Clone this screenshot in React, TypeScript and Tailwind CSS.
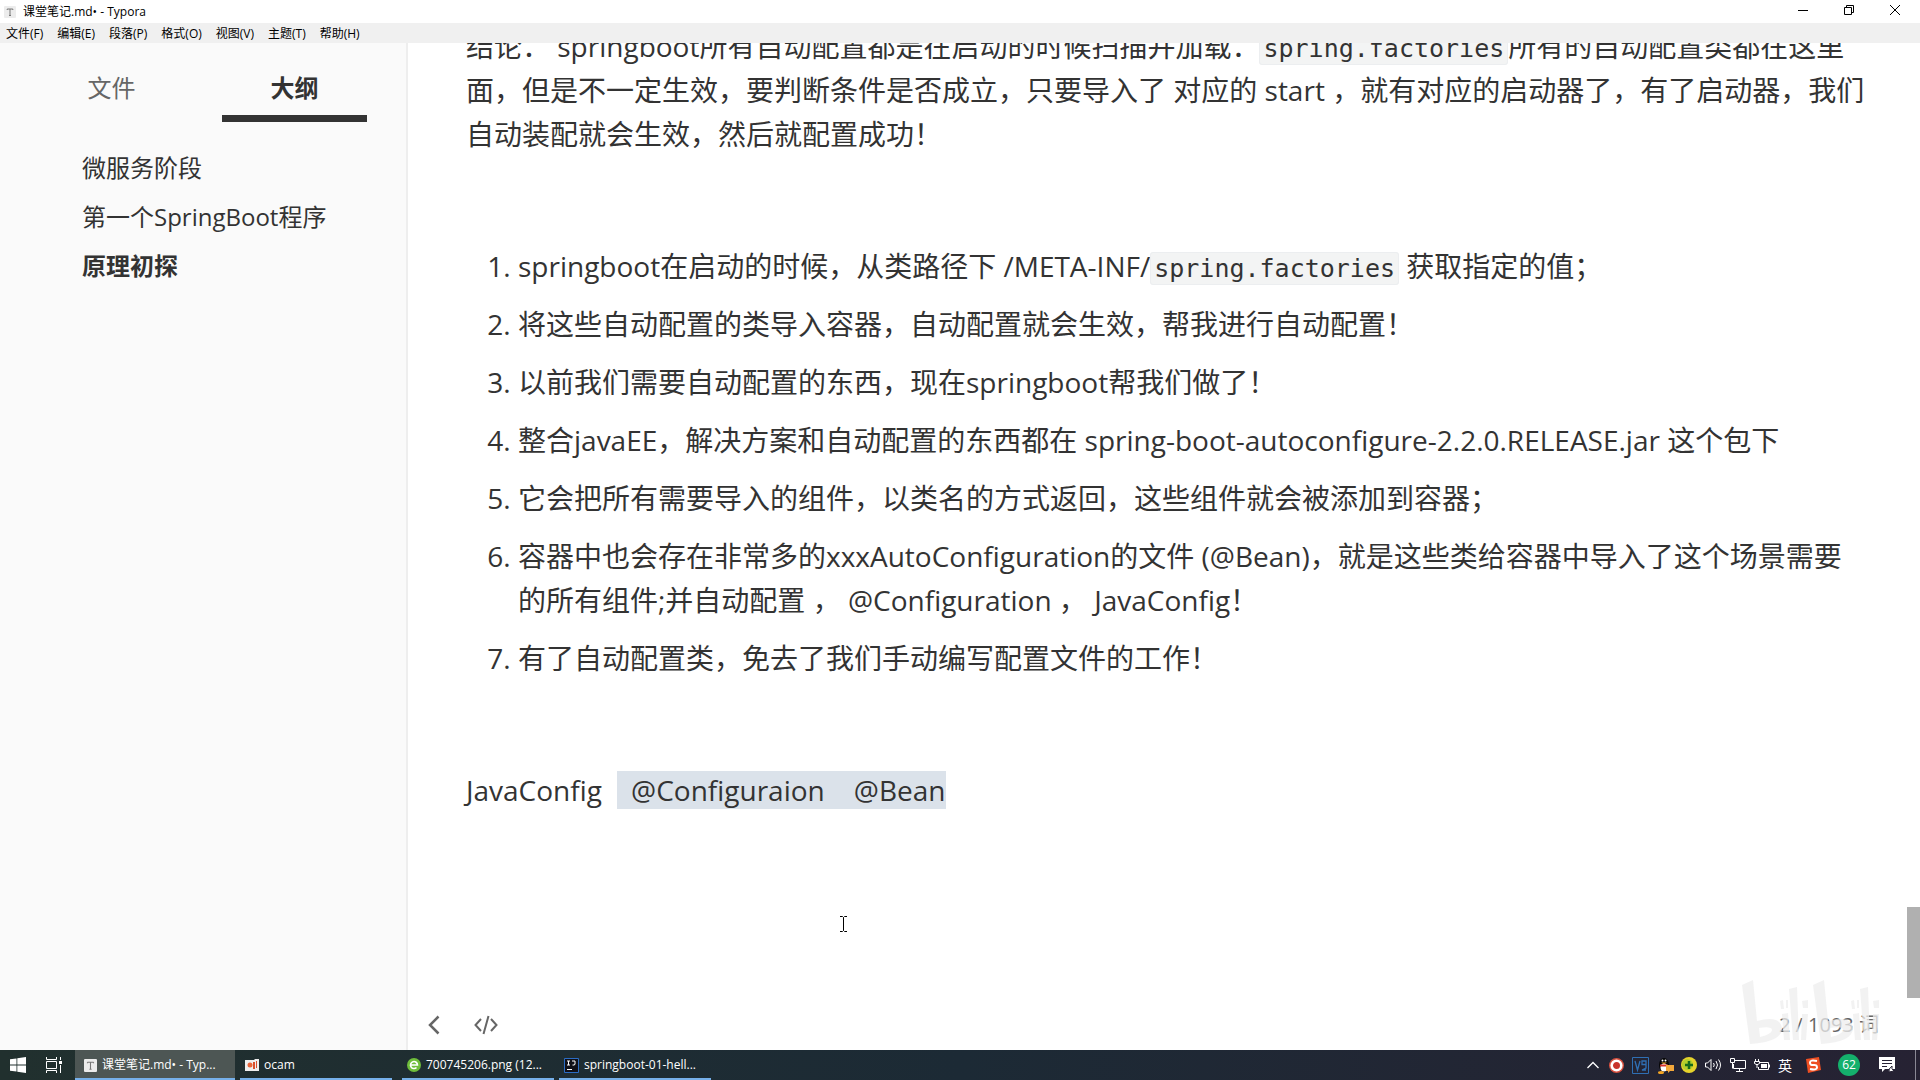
import React from "react";

const menu = ["文件(F)", "编辑(E)", "段落(P)", "格式(O)", "视图(V)", "主题(T)", "帮助(H)"];

function TyporaIcon({ size }: { size: number }) {
  return (
    <svg width={size} height={size} viewBox="0 0 12 12" aria-hidden="true">
      <rect width="12" height="12" rx="1" fill="#ececec" />
      <path d="M3.2 3h5.6M6 3v6.5M5 9.5h2M3.2 3v1M8.8 3v1" stroke="#777" fill="none" />
    </svg>
  );
}

function Code({ children }: { children: React.ReactNode }) {
  return (
    <code className="rounded-[3px] border border-[#eceef0] bg-[#f3f4f4] px-[3px] py-px font-['DejaVu_Sans_Mono',monospace] text-[25px] leading-none">
      {children}
    </code>
  );
}

const points: React.ReactNode[] = [
  <>springboot在启动的时候，从类路径下 /META-INF/<Code>spring.factories</Code> 获取指定的值；</>,
  <>将这些自动配置的类导入容器，自动配置就会生效，帮我进行自动配置！</>,
  <>以前我们需要自动配置的东西，现在springboot帮我们做了！</>,
  <>整合javaEE，解决方案和自动配置的东西都在 spring-boot-autoconfigure-2.2.0.RELEASE.jar 这个包下</>,
  <>它会把所有需要导入的组件，以类名的方式返回，这些组件就会被添加到容器；</>,
  <>容器中也会存在非常多的xxxAutoConfiguration的文件 (@Bean)，就是这些类给容器中导入了这个场景需要<br />的所有组件;并自动配置 ， @Configuration ， JavaConfig！</>,
  <>有了自动配置类，免去了我们手动编写配置文件的工作！</>,
];

function TitleBar() {
  return (
    <header className="shrink-0 text-[12px] text-black">
      <div className="flex h-[23px] items-center bg-white pl-1 pr-[2px]">
        <TyporaIcon size={12} />
        <h1 className="ml-[7px] grow text-[12px]">课堂笔记.md• - Typora</h1>
        <button aria-label="最小化" className="flex h-5 w-[46px] items-center justify-center self-start">
          <svg width="10" height="10" viewBox="0 0 10 10"><path d="M0 5.5h10" stroke="#000" /></svg>
        </button>
        <button aria-label="还原" className="flex h-5 w-[46px] items-center justify-center self-start">
          <svg width="10" height="10" viewBox="0 0 10 10" fill="none" stroke="#000"><path d="M.5 2.5h7v7h-7zM2.5 2V.5h7v7H8" /></svg>
        </button>
        <button aria-label="关闭" className="flex h-5 w-[46px] items-center justify-center self-start">
          <svg width="10" height="10" viewBox="0 0 10 10"><path d="M0 0l10 10M10 0L0 10" stroke="#000" /></svg>
        </button>
      </div>
      <nav className="flex h-5 items-center gap-[14px] bg-[#f0f0f0] pl-[6px] pt-[2px]">
        {menu.map((m) => <button key={m}>{m}</button>)}
      </nav>
    </header>
  );
}

function Sidebar() {
  return (
    <aside className="w-[408px] shrink-0 border-r-2 border-[#eeeeee] bg-[#fafafa] text-[24px] text-[#333]">
      <div className="flex pl-[39px]" role="tablist">
        <button role="tab" aria-selected="false" className="mt-[22px] h-[57px] w-[145px] pb-[12px] text-center leading-[30px] text-[#666]">文件</button>
        <button role="tab" aria-selected="true" className="ml-[38px] mt-[22px] h-[57px] w-[145px] border-b-[7px] border-[#333] pb-[5px] font-bold leading-[30px]">大纲</button>
      </div>
      <nav className="mt-[21px] flex flex-col pl-[82px] leading-[49px]">
        <a href="#a">微服务阶段</a>
        <a href="#b">第一个SpringBoot程序</a>
        <a href="#c" className="font-bold">原理初探</a>
      </nav>
    </aside>
  );
}

function Watermark() {
  return (
    <svg className="pointer-events-none absolute bottom-1 right-[36px]" width="142" height="66" viewBox="0 0 142 66" fill="#ededed" fillOpacity="0.75" aria-hidden="true">
      <path d="M0 5 11 0 15 41Q38 35 40 48Q40 62 8 64ZM17 48l1 9q12-3 12-7t-13-2Z" fillRule="evenodd" />
      <path d="M71 5 82 0 86 41Q109 35 111 48Q111 62 79 64ZM88 48l1 9q12-3 12-7t-13-2Z" fillRule="evenodd" />
      <path d="M47 9 55 7 57 60H51ZM118 9 126 7 128 60H122ZM38 21l3-1 1 9h-3zM44 20l2 0v8h-2zM60 21l6-1v8h-5zM109 21l3-1 1 9h-3zM115 20h2v8h-2zM131 21l6-1v8h-5zM40 34l6-1 2 27h-6zM60 34h6l-2 26h-5zM111 34l6-1 2 27h-6zM131 34h6l-2 26h-5z" />
    </svg>
  );
}

function Editor() {
  return (
    <main className="relative flex min-w-0 grow flex-col bg-white text-[#333]">
      <article className="min-h-0 grow overflow-hidden pl-[58px] text-[28px] leading-[44px]">
        <p className="-mt-[19px] whitespace-nowrap">
          结论： springboot所有自动配置都是在启动的时候扫描并加载：<Code>spring.factories</Code>所有的自动配置类都在这里<br />
          面，但是不一定生效，要判断条件是否成立，只要导入了 对应的 start ，就有对应的启动器了，有了启动器，我们<br />
          自动装配就会生效，然后就配置成功！
        </p>
        <ol className="mt-[88px] flex list-decimal flex-col gap-[14px] whitespace-nowrap pl-[52px]">
          {points.map((p, i) => <li key={i}>{p}</li>)}
        </ol>
        <p className="mt-[88px] whitespace-pre">JavaConfig  <mark className="bg-[#dbe2ea] text-inherit">  @Configuraion    @Bean</mark></p>
      </article>
      <svg className="absolute left-[428px] top-[873px]" width="14" height="16" viewBox="0 0 14 16" fill="none" stroke="#000" aria-hidden="true">
        <path d="M4 .5h2.500l1 1 1-1H11M4 15.500h2.500l1-1 1 1H11M7.500 1.500v13" />
      </svg>
      <div className="absolute right-0 top-[864px] h-[91px] w-[13px] bg-[#b0b0b0]" />
      <footer className="relative flex h-[50px] shrink-0 items-center pl-[20px] pr-[41px] text-[#666]">
        <button aria-label="侧边栏">
          <svg width="12" height="20" viewBox="0 0 12 20" fill="none" stroke="#666" strokeWidth="2.500"><path d="M10.500 1.500 2 10l8.500 8.500" /></svg>
        </button>
        <button aria-label="源代码模式" className="ml-[34px]">
          <svg width="24" height="20" viewBox="0 0 24 20" fill="none" stroke="#666" strokeWidth="2"><path d="M7 4 1.500 10 7 16M17 4l5.500 6-5.500 6M14.500 1l-5 18" /></svg>
        </button>
        <span className="ml-auto text-[20px]">2 / 1093 词</span>
        <Watermark />
      </footer>
    </main>
  );
}

function Task({ icon, label, active }: { icon: React.ReactNode; label: string; active?: boolean }) {
  return (
    <button className={active ? "flex w-40 items-center gap-[5px] border-b-2 border-[#76b0ea] bg-[#4d5654] pl-[9px] pt-[2px]" : "flex w-[152px] items-center gap-[5px] border-b-2 border-[#76b0ea] pl-[5px] pt-[2px]"}>
      {icon}
      <span>{label}</span>
    </button>
  );
}

function Taskbar() {
  return (
    <footer className="flex h-[30px] shrink-0 bg-linear-to-r from-[#21302e] via-[#1c2a35] to-[#262233] text-[12px] text-white">
      <button aria-label="开始" className="w-[36px] pl-[10px]">
        <svg width="16" height="16" viewBox="0 0 16 16" fill="#fff"><path d="M0 2.300 6.500 1.400v6.200H0zM7.300 1.300 16 0v7.600H7.300zM0 8.400h6.500v6.200L0 13.700zM7.300 8.400H16V16l-8.700-1.300z" /></svg>
      </button>
      <button aria-label="任务视图" className="w-[39px] pl-[10px]">
        <svg width="16" height="16" viewBox="0 0 16 16" fill="none" stroke="#fff"><path d="M.5 0v2.500h10V0M.5 4.500h10v7H.5zM.5 16v-2.500h10V16M14.500 0v3M14.500 8v8" /><path d="M13 4h3v3h-3z" fill="#fff" stroke="none" /></svg>
      </button>
      <div className="flex gap-[5px]">
        <Task active icon={<TyporaIcon size={13} />} label="课堂笔记.md• - Typ..." />
        <Task label="ocam" icon={
          <svg width="14" height="12" viewBox="0 0 14 12"><path d="M0 1h9l1-1h4v12H0z" fill="#eee" /><circle cx="5" cy="6" r="2.500" fill="#e8653a" /><path d="M8 3h2v7H8zM11 2h1v7h-1z" fill="#d94e2c" /></svg>
        } />
        <span className="w-0" />
        <Task label="700745206.png (12..." icon={
          <svg width="14" height="14" viewBox="0 0 14 14"><circle cx="7" cy="7" r="7" fill="#6fbe3c" /><path d="M3 7h7.500a3.500 3.500 0 1 0-1 2.500" fill="none" stroke="#fff" strokeWidth="1.600" /></svg>
        } />
        <Task label="springboot-01-hell..." icon={
          <svg width="15" height="15" viewBox="0 0 15 15"><path d="M.5.500h14v14H.5z" fill="#101018" stroke="#2b6cc4" /><path d="M3 3h3M4.500 3v4M3 7h3M8 3h3v3q0 1.500-2.500 1M3 11.500h5" stroke="#fff" fill="none" /></svg>
        } />
      </div>
      <div className="ml-auto flex items-center">
        <svg width="12" height="8" viewBox="0 0 12 8" fill="none" stroke="#fff" strokeWidth="1.300"><path d="M.5 7 6 1.500 11.500 7" /></svg>
        <svg className="ml-[10px]" width="15" height="15" viewBox="0 0 15 15"><circle cx="7.500" cy="7.500" r="7.500" fill="#d8503f" /><circle cx="7.500" cy="7.500" r="4.800" fill="#c8342c" stroke="#fff" strokeWidth="2.600" /></svg>
        <svg className="ml-[8px]" width="17" height="17" viewBox="0 0 17 17" fill="none" stroke="#2f6fb4"><path d="M.5.500h16v16H.5z" /><path d="M3 4l2.500 9L8 4M10 4h4v3.500h-4zM14 7.500V11l-4 2h4" strokeWidth="1.300" /></svg>
        <svg className="ml-[8px]" width="17" height="17" viewBox="0 0 17 17"><ellipse cx="7" cy="8" rx="5" ry="7" fill="#050505" /><ellipse cx="7" cy="10.500" rx="3.500" ry="4" fill="#fff" /><circle cx="5.500" cy="3.500" r="1" fill="#fff" /><circle cx="8.500" cy="3.500" r="1" fill="#fff" /><path d="M4 5.500h6L7 7z" fill="#f5a623" /><path d="M3 7.500h8v2H3z" fill="#d8322a" /><ellipse cx="4" cy="15.500" rx="3" ry="1.500" fill="#f5a623" /><path d="M9 8h8v6h-4l-2 2v-2H9z" fill="#f3a83b" /></svg>
        <svg className="ml-[7px]" width="16" height="16" viewBox="0 0 16 16"><circle cx="8" cy="8" r="8" fill="#e6d32c" /><circle cx="6.500" cy="7.500" r="5.500" fill="#b5cf2c" /><path d="M8 4v8M4 8h8" stroke="#176b1c" strokeWidth="2.500" /></svg>
        <svg className="ml-[8px]" width="17" height="14" viewBox="0 0 17 14" fill="none" stroke="#fff"><path d="M.5 5h2L6 1.500v11L2.500 9h-2zM8.500 5q1.500 2 0 4M11 3q3 4 0 8M13.500 1.500q4 5.500 0 11" /></svg>
        <svg className="ml-[8px]" width="16" height="14" viewBox="0 0 16 14" fill="none" stroke="#fff"><path d="M5 2.500h10.500v8H3.500V6M9.500 10.500v3M6 13.500h7M.5.500h4v4h-4zM2.500 4.500v6" /></svg>
        <svg className="ml-[8px]" width="16" height="12" viewBox="0 0 16 12" fill="none" stroke="#fff"><path d="M6 3.500h8.500v7H4.500V8M15.500 5.500v3M1.500 0v2M4.500 0v2M.5 2.500h5v2q-2.500 2.500-5 0zM3 6v3" /><path d="M7 5h6v4H7z" fill="#fff" stroke="none" /></svg>
        <button className="ml-[8px] text-[14px]" aria-label="输入法">英</button>
        <svg className="ml-[13px]" width="16" height="16" viewBox="0 0 16 16"><path d="M1 2 14 0l2 13-13 3z" fill="#ee4f22" /><path d="M12 4Q5 2.500 5 5.500T8.500 8 12 10.500 5 12" fill="none" stroke="#fff" strokeWidth="2" /></svg>
        <span className="ml-[17px] flex size-[22px] items-center justify-center rounded-full bg-[#14b06c]">62</span>
        <button aria-label="通知" className="ml-[19px] mr-[20px]">
          <svg width="16" height="16" viewBox="0 0 16 16"><path d="M0 0h16v12H6l-3 3v-3H0z" fill="#fff" /><path d="M3 3.500h10M3 6.500h10M3 9.500h5" stroke="#262233" /><path d="M10 15q-1-3 3-6-1 3 2 5z" fill="#fff" stroke="#262233" /></svg>
        </button>
        <span className="h-[30px] w-[5px] border-l border-[#8a8894]" />
      </div>
    </footer>
  );
}

export default function App() {
  return (
    <div className="flex h-screen flex-col overflow-hidden bg-white font-['Open_Sans','Noto_Sans_CJK_SC',sans-serif]" lang="zh-CN">
      <TitleBar />
      <div className="flex min-h-0 grow">
        <Sidebar />
        <Editor />
      </div>
      <Taskbar />
    </div>
  );
}
